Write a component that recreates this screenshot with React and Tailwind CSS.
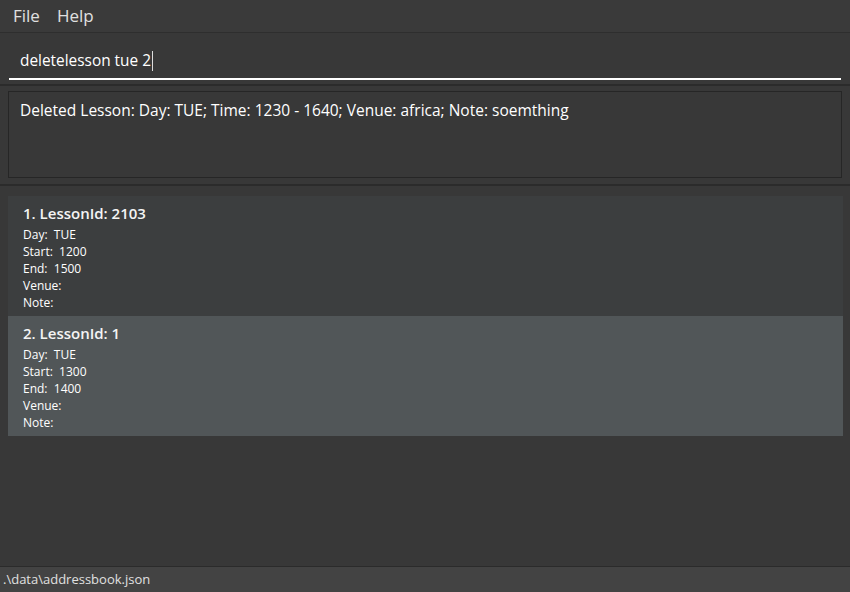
import React from "react";

const lessons = [
  { id: "2103", day: "TUE", start: "1200", end: "1500", venue: "", note: "" },
  { id: "1", day: "TUE", start: "1300", end: "1400", venue: "", note: "" },
];

function Card({ index, l, odd }) {
  return (
    <div className={`${odd ? "bg-[#515658]" : "bg-[#3c3e3f]"} h-[120px] pl-[15px] pt-[7px] flex flex-col`}>
      <div className="text-[15px] leading-[20px] font-semibold text-[#f4f4f4]">
        {index}. LessonId: {l.id}
      </div>
      <div className="text-[12px] leading-[17px] text-white mt-[3px]">
        <div>Day:&nbsp; {l.day}</div>
        <div>Start:&nbsp; {l.start}</div>
        <div>End:&nbsp; {l.end}</div>
        <div>Venue:&nbsp;{l.venue}</div>
        <div>Note:&nbsp;{l.note}</div>
      </div>
    </div>
  );
}

export default function App() {
  return (
    <div
      className="w-[850px] h-[592px] bg-[#383838] flex flex-col text-white overflow-hidden"
      style={{ fontFamily: '"Open Sans", "Noto Sans", sans-serif' }}
    >
      <div className="h-[33px] bg-[#3a3a3a] flex items-center border-b border-[#2e2e2e] shrink-0">
        <span className="ml-[13px] text-[17px] text-[#e0e0e0]">File</span>
        <span className="ml-[17px] text-[17px] text-[#e0e0e0]">Help</span>
      </div>
      <div className="h-[53px] px-[9px] pt-[11px] shrink-0 border-b-2 border-[#2b2b2b]">
        <div className="h-[36px] border-b-2 border-white flex items-center pl-[11px]">
          <span className="text-[15.4px] text-white">deletelesson tue 2</span>
          <span className="w-[1px] h-[20px] bg-[#dcdcdc] ml-[1px]"></span>
        </div>
      </div>
      <div className="h-[100px] px-[8px] pt-[5px] pb-[6px] shrink-0 border-b-2 border-[#2b2b2b]">
        <div className="h-full border border-[#262626] px-[11px] pt-[7px]">
          <div className="text-[15.5px] leading-[22px] text-white">
            Deleted Lesson: Day: TUE; Time: 1230 - 1640; Venue: africa; Note: soemthing
          </div>
        </div>
      </div>
      <div className="flex-1 pt-[10px] pl-[8px] pr-[7px]">
        {lessons.map((l, i) => (
          <Card key={i} index={i + 1} l={l} odd={i % 2 === 1} />
        ))}
      </div>
      <div className="h-[26px] shrink-0 bg-[#434343] border-t border-[#2b2b2b] flex items-center pl-[3px]">
        <span className="text-[13px] text-[#e0e0e0]">.\data\addressbook.json</span>
      </div>
    </div>
  );
}
